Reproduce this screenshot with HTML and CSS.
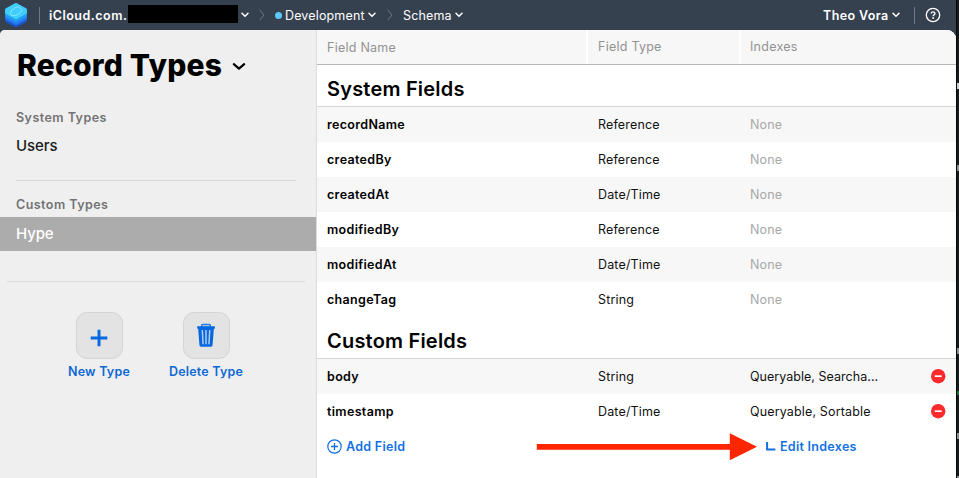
FILE: index.html
```
<!DOCTYPE html>
<html lang="en">
<head>
<meta charset="utf-8">
<title>Record Types</title>
<link rel="stylesheet" href="styles.css">
</head>
<body>
<svg class="defs" width="0" height="0">
  <symbol id="chev" viewBox="0 0 8 6"><path d="M1 1.2 4 4.2 7 1.2" fill="none" stroke="currentColor" stroke-width="1.5" stroke-linecap="round" stroke-linejoin="round"/></symbol>
  <symbol id="sep" viewBox="0 0 6 12"><path d="M.8.8 5 6 .8 11.2" fill="none" stroke="#6c7785" stroke-width="1"/></symbol>
  <symbol id="minus" viewBox="0 0 15 15"><circle cx="7.2" cy="7.2" r="7.2" fill="#fc2a2d"/><path d="M3.700 7.200h7" stroke="#fff" stroke-width="1.700"/></symbol>
</svg>
<div class="window">
  <div class="app">
    <header class="topbar">
      <svg class="logo" viewBox="0 0 24 26">
        <path d="M12 7 22.6 13v6.2q0 .8-.8 1.2L12 25.6 2.2 20.4q-.8-.4-.8-1.2V13z" fill="#1c55cc"/>
        <path d="M12 5 23 11v5.800q0 .8-.8 1.200L12 23.300 1.800 18q-.8-.4-.8-1.200V11z" fill="#2378ee"/>
        <path d="M12 3 23 8v6q0 .8-.8 1.200L12 20.600 1.800 15.200Q1 14.800 1 14V8z" fill="#2399f6"/>
        <path d="M11 1.300q1-.6 2 0l9 5q1 .6 1 1.500v2.800q0 .9-1 1.400l-9 5q-1 .5-2 0l-9-5q-1-.5-1-1.400V7.800q0-.9 1-1.500z" fill="#3fcdfb"/>
        <path d="M8.500 13.600c-2 0-2.600-2-1.400-3.300-.5-1.900 1.200-3.300 2.700-2.900 1-2.700 5.600-3.600 6.600-.8 2.400.7 1.700 3-.4 4.200-2 1.600-3.500 3.200-7.500 2.800z" fill="none" stroke="#93eaff" stroke-width=".9"/>
      </svg>
      <i class="bar"></i>
      <span class="t-container">iCloud.com.</span>
      <span class="redacted"></span>
      <svg class="chev c1"><use href="#chev"/></svg>
      <svg class="sep s1"><use href="#sep"/></svg>
      <i class="dot"></i>
      <span class="t-env">Development</span>
      <svg class="chev"><use href="#chev"/></svg>
      <svg class="sep s2"><use href="#sep"/></svg>
      <span class="t-schema">Schema</span>
      <svg class="chev"><use href="#chev"/></svg>
      <span class="t-user">Theo Vora</span>
      <svg class="chev"><use href="#chev"/></svg>
      <i class="bar right"></i>
      <svg class="help" viewBox="0 0 16 16"><circle cx="8" cy="8" r="6.700" fill="none" stroke="#fff" stroke-width="1.300"/><path d="M6.200 6.500C6.200 4.300 9.900 4.300 9.900 6.400 9.900 7.700 8.100 7.700 8.100 9.200" fill="none" stroke="#fff" stroke-width="1.400"/><circle cx="8.100" cy="11" r=".9" fill="#fff"/></svg>
    </header>
    <main class="panel">
      <aside class="sidebar">
        <h1><span>Record Types</span><svg class="bigchev" viewBox="0 0 14 9"><path d="M1.800 2.200 7 6.700 12.200 2.200" fill="none" stroke="#000" stroke-width="2.200" stroke-linecap="round" stroke-linejoin="round"/></svg></h1>
        <div class="group g1"><span>System Types</span></div>
        <div class="type"><span>Users</span></div>
        <hr class="rule1">
        <div class="group g2"><span>Custom Types</span></div>
        <div class="type selected"><span>Hype</span></div>
        <hr class="rule2">
        <div class="actions">
          <div class="action"><div class="tile"><svg viewBox="0 0 46 46"><path d="M22.500 17v17M14 25.500h17" stroke="#0668e1" stroke-width="3"/></svg></div><span>New Type</span></div>
          <div class="action"><div class="tile"><svg viewBox="0 0 46 46"><path d="M18 14.500v-1.500q0-1.500 1.500-1.500h6q1.500 0 1.500 1.500v1.500" fill="#9fc0eb" stroke="#0668e1" stroke-width="1.200"/><path d="M13.500 13.500h18v2.500h-1l-1.300 17q-.1 1.500-1.600 1.500h-10.200q-1.500 0-1.600-1.500l-1.300-17h-1z" fill="#0668e1"/><path d="M18.700 17.500l.8 14.500M22.500 17.500V32M26.300 17.500l-.8 14.500" stroke="#b5cdec" stroke-width="1.500"/></svg></div><span>Delete Type</span></div>
        </div>
      </aside>
      <section class="content">
        <div class="head"><div>Field Name</div><div>Field Type</div><div>Indexes</div></div>
        <h2><span>System Fields</span></h2>
        <div class="row odd"><b>recordName</b><span>Reference</span><em>None</em></div>
        <div class="row"><b>createdBy</b><span>Reference</span><em>None</em></div>
        <div class="row odd"><b>createdAt</b><span>Date/Time</span><em>None</em></div>
        <div class="row"><b>modifiedBy</b><span>Reference</span><em>None</em></div>
        <div class="row odd"><b>modifiedAt</b><span>Date/Time</span><em>None</em></div>
        <div class="row"><b>changeTag</b><span>String</span><em>None</em></div>
        <h2><span>Custom Fields</span></h2>
        <div class="row odd"><b>body</b><span>String</span><span class="cut">Queryable, Searcha...</span><svg class="minus"><use href="#minus"/></svg></div>
        <div class="row"><b>timestamp</b><span>Date/Time</span><span>Queryable, Sortable</span><svg class="minus"><use href="#minus"/></svg></div>
        <div class="foot">
          <svg class="plus" viewBox="0 0 15 15"><circle cx="7.500" cy="7.500" r="6.700" fill="none" stroke="#1070e4" stroke-width="1.200"/><path d="M7.500 4v7M4 7.500h7" stroke="#1070e4" stroke-width="1.300"/></svg>
          <span class="add">Add Field</span>
          <svg class="arrow" viewBox="0 0 222 28"><path d="M.8 11h193V.2L221 13.800 193.800 27.200V16.800H.8z" fill="#fd2600"/></svg>
          <svg class="elbow" viewBox="0 0 10 10"><path d="M1.100 0v7.500h8.300" fill="none" stroke="#1070e4" stroke-width="2"/></svg>
          <span class="edit">Edit Indexes</span>
        </div>
      </section>
    </main>
  </div>
  <div class="edge"><i class="e1"></i><i class="e2"></i><i class="e3"></i><i class="e4"></i><i class="e5"></i><i class="e6"></i></div>
</div>
</body>
</html>
```
FILE: styles.css
```
* { box-sizing: border-box; }
body { margin: 0; overflow: hidden; font-family: Inter, sans-serif; font-size: 12.5px; letter-spacing: .15px; color: #111; }
.defs { display: none; }
svg, i { display: block; flex: none; }
span, b, em { white-space: nowrap; }
.window { display: flex; width: 959px; height: 478px; background: #050606; }
.app { width: 956px; height: 478px; background: #364150; }
.topbar { height: 30px; display: flex; align-items: center; color: #fff; padding-left: 4px; }
.topbar > span { flex: none; line-height: 29px; }
.logo { width: 24px; height: 26px; }
.bar { width: 1px; height: 17px; background: #6f7883; margin-left: 11px; }
.t-container { margin-left: 9px; width: 79px; font-weight: 600; letter-spacing: .5px; }
.topbar .redacted { width: 110px; height: 18px; background: #000; margin-top: -3px; }
.chev { width: 8px; height: 6px; margin-left: 4px; }
.c1 { margin-left: 3px; }
.sep { width: 6px; height: 12px; }
.s1 { margin-left: 10px; }
.s2 { margin-left: 11px; }
.dot { width: 7px; height: 7px; border-radius: 50%; background: #5ac8fa; margin-left: 10px; }
.t-env { width: 79px; margin-left: 3px; }
.t-schema { width: 48px; margin-left: 10px; }
.t-user { width: 64px; margin-left: auto; font-weight: 600; letter-spacing: .4px; }
.t-user + .chev { margin-left: 5px; }
.bar.right { margin-left: 14px; }
.help { width: 16px; height: 16px; margin-left: 10px; margin-right: 15px; }
.panel { display: flex; height: 448px; border-radius: 5px 9px 0 0; overflow: hidden; background: #fff; }
.sidebar { width: 317px; background: #efefef; border-right: 1px solid #dcdcdc; }
h1 { margin: 0; padding: 0 0 0 17px; height: 70px; display: flex; align-items: center; font-size: 30px; font-weight: 800; color: #000; }
h1 span { width: 215px; letter-spacing: .2px; }
.bigchev { width: 14px; height: 9px; margin-top: 3px; }
.group { padding-left: 16px; font-weight: 600; color: #737373; letter-spacing: .46px; line-height: 18px; }
.g1 { padding-top: 9px; height: 29px; }
.type { height: 34px; line-height: 33px; padding-left: 16px; font-size: 15px; font-weight: 500; color: #1b1b1b; letter-spacing: -.1px; }
hr { border: 0; height: 1px; background: #d8d8d8; margin: 0; }
.rule1 { margin: 17px 20px 0 16px; }
.g2 { padding-top: 15px; height: 36px; }
.selected { background: #acacac; color: #fff; }
.rule2 { margin: 30px 11px 0 7px; background: #dcdcdc; }
.actions { display: flex; padding: 30px 0 0 46px; }
.action { width: 107px; display: flex; flex-direction: column; align-items: center; color: #0d68d5; font-weight: 600; }
.action span { line-height: 17px; margin: 4px 1px 0 0; letter-spacing: .2px; }
.tile { width: 47px; height: 47px; border: 1px solid #d5d5d5; border-radius: 11px; background: #e3e3e3; }
.tile svg { width: 45px; height: 45px; }
.content { width: 639px; }
.head { display: grid; grid-template-columns: 269px 2px 151px 2px 1fr; grid-template-rows: 34px; height: 35px; border-bottom: 1px solid #b9b9b9; background: #fff; color: #929292; line-height: 33px; letter-spacing: .25px; }
.head div { background: #f7f7f7; padding-left: 10px; }
.head div:nth-child(1) { line-height: 35px; }
.head div:nth-child(2) { grid-column: 3; padding-left: 10px; }
.head div:nth-child(3) { grid-column: 5; padding-left: 9px; }
h2 { margin: 0; padding-left: 10px; height: 42px; line-height: 48px; border-bottom: 1px solid #d5d5d5; font-size: 20px; font-weight: 600; color: #000; letter-spacing: .2px; }
.row { height: 35px; display: grid; grid-template-columns: 271px 152px 181px 15px; padding-left: 10px; align-items: center; line-height: 35px; }
.odd { background: #f7f7f7; }
.row b { font-weight: 600; color: #000; letter-spacing: .33px; }
.row em { font-style: normal; color: #a8a8a8; }
.row .cut { letter-spacing: .03px; }
.minus { width: 15px; height: 15px; }
.foot { height: 35px; display: flex; align-items: center; padding-left: 10px; color: #1070e4; font-weight: 600; line-height: 16px; letter-spacing: .28px; }
.foot span { margin-top: 1px; }
.plus { width: 15px; height: 15px; }
.add { width: 59px; margin-left: 4px; }
.arrow { width: 222px; height: 28px; margin-left: 131px; }
.elbow { width: 10px; height: 10px; margin-left: 8px; }
.edit { margin-left: 4px; }
.edge { width: 3px; height: 478px; background: linear-gradient(90deg, #050606 1px, #171a1c 1px); display: flex; flex-direction: column; align-items: flex-end; }
.edge i { width: 2px; height: 6px; background: #8b8f91; }
.edge .e1 { margin-top: 83px; background: #cfd1d2; }
.edge .e2 { margin-top: 76px; }
.edge .e3 { margin-top: 177px; }
.edge .e4 { margin-top: 37px; height: 4px; background: #19733c; }
.edge .e5 { margin-top: 38px; }
.edge .e6 { margin-top: 37px; }
```
